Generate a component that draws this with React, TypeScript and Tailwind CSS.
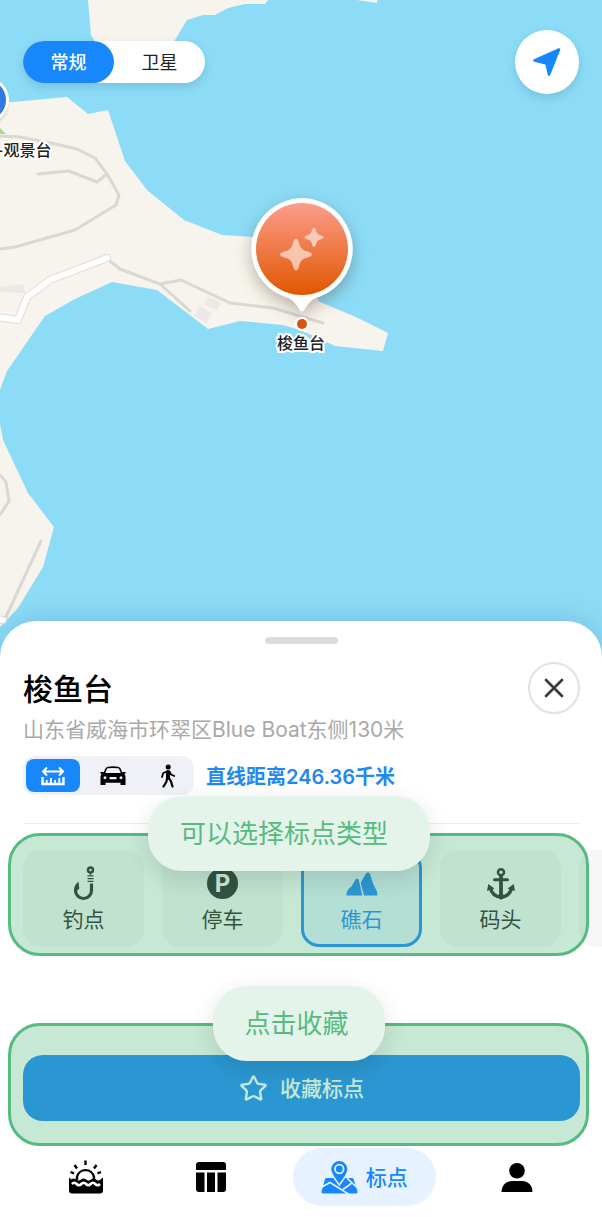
import { useState } from "react";
import type { ReactNode } from "react";
import { Star, X } from "lucide-react";

type Option = {
  id: string;
  label: string;
  icon: ReactNode;
};

const spotTypes: Option[] = [
  { id: "fishing", label: "钓点", icon: <HookIcon /> },
  { id: "parking", label: "停车", icon: <ParkingIcon /> },
  { id: "reef", label: "礁石", icon: <ReefIcon /> },
  { id: "dock", label: "码头", icon: <AnchorIcon /> },
];

export default function App() {
  const [layer, setLayer] = useState("normal");
  const [mode, setMode] = useState("line");
  const [spotType, setSpotType] = useState("reef");

  return (
    <main className="flex min-h-screen flex-col bg-[#8cdcf7] font-['Inter','Noto_Sans_CJK_SC',sans-serif] text-black">
      <section className="relative -mb-10 min-h-[480px] flex-1 overflow-hidden">
        <MapDrawing />

        <div className="absolute left-0 top-[140px] -ml-1">
          <p className={mapLabelClass}>-观景台</p>
        </div>

        <button
          type="button"
          className="absolute left-1/2 top-[196px] flex -translate-x-1/2 flex-col items-center"
        >
          <PinIcon />
          <span className={mapLabelClass}>梭鱼台</span>
        </button>

        <div className="relative flex items-start justify-between px-[23px] pt-[30px]">
          <div className="mt-[11px] flex rounded-full bg-white shadow-[0_4px_10px_rgba(0,60,90,0.16)]">
            <button
              type="button"
              onClick={() => setLayer("normal")}
              className={layer === "normal" ? layerActiveClass : layerClass}
            >
              常规
            </button>
            <button
              type="button"
              onClick={() => setLayer("satellite")}
              className={layer === "satellite" ? layerActiveClass : layerClass}
            >
              卫星
            </button>
          </div>

          <button
            type="button"
            aria-label="定位"
            className="flex size-16 items-center justify-center rounded-full bg-white shadow-[0_4px_10px_rgba(0,60,90,0.16)]"
          >
            <LocateIcon />
          </button>
        </div>
      </section>

      <section className="relative rounded-t-[36px] bg-white pl-[23px] pr-[22px] pt-4 shadow-[0_-4px_24px_rgba(0,60,90,0.14)]">
        <div className="mx-auto h-[7px] w-[73px] rounded-full bg-[#dcdcdc]" />

        <div className="mt-[18px] flex items-center justify-between">
          <h1 className="pt-0.5 text-[30px] font-medium leading-9">梭鱼台</h1>
          <button
            type="button"
            aria-label="关闭"
            className="flex size-[52px] items-center justify-center rounded-full border-2 border-[#e2e2e2] text-[#3a3a3a]"
          >
            <X size={32} strokeWidth={2} />
          </button>
        </div>

        <p className="pt-0.5 text-[21px] leading-7 text-[#a9a9a9]">
          山东省威海市环翠区Blue Boat东侧130米
        </p>

        <div className="mt-3 flex items-center gap-3">
          <div className="flex rounded-xl bg-[#eff1f7] p-[3px]">
            <button
              type="button"
              aria-label="直线"
              onClick={() => setMode("line")}
              className={`w-[54px] ${mode === "line" ? modeActiveClass : modeClass}`}
            >
              <RulerIcon />
            </button>
            <button
              type="button"
              aria-label="驾车"
              onClick={() => setMode("car")}
              className={`w-[65px] ${mode === "car" ? modeActiveClass : modeClass}`}
            >
              <CarIcon />
            </button>
            <button
              type="button"
              aria-label="步行"
              onClick={() => setMode("walk")}
              className={`w-[46px] ${mode === "walk" ? modeActiveClass : modeClass}`}
            >
              <WalkIcon />
            </button>
          </div>
          <p className="pt-0.5 text-[20px] font-semibold leading-7 text-[#2189f0]">
            直线距离246.36千米
          </p>
        </div>

        <hr className="mt-7 border-[#ededed]" />

        <div className="relative mt-[26px]">
          <div className="-mr-[22px] flex gap-[18px] overflow-hidden">
            {spotTypes.map((item) => (
              <button
                key={item.id}
                type="button"
                onClick={() => setSpotType(item.id)}
                className={spotType === item.id ? typeActiveClass : typeClass}
              >
                <span className="flex h-9 items-center">{item.icon}</span>
                <span className="text-[21px] leading-7">{item.label}</span>
              </button>
            ))}
            <div className="h-[97px] w-[121px] shrink-0 rounded-[18px] bg-[#f7f7f7]" />
          </div>
          <Highlight className="-bottom-[9px] -top-[17px]" labelClass="left-[137px] pr-[42px]">
            可以选择标点类型
          </Highlight>
        </div>

        <div className="relative mt-[108px]">
          <button
            type="button"
            className="flex h-[66px] w-full items-center justify-center gap-3 rounded-[20px] bg-[#1787fb] text-[21px] font-medium text-white"
          >
            <Star size={29} strokeWidth={2} />
            <span className="pt-0.5">收藏标点</span>
          </button>
          <Highlight
            className="-bottom-[25px] -top-8"
            labelClass="left-1/2 -translate-x-1/2 pr-9"
          >
            点击收藏
          </Highlight>
        </div>

        <nav className="mt-[27px] flex h-[58px] items-center">
          <a href="#tide" aria-label="潮汐" className={navClass}>
            <TideIcon />
          </a>
          <a href="#table" aria-label="数据" className={navClass}>
            <TableIcon />
          </a>
          <a
            href="#spots"
            aria-current="page"
            className="mx-[19px] flex h-full w-[143px] items-center justify-center gap-2 rounded-full bg-[#e6f2ff] text-[21px] font-medium text-[#1787fb]"
          >
            <MapPinIcon />
            <span className="pt-0.5">标点</span>
          </a>
          <a href="#me" aria-label="我的" className={navClass}>
            <PersonIcon />
          </a>
        </nav>
        <div className="h-[11px]" />
      </section>
    </main>
  );
}

function Highlight({
  className,
  labelClass,
  children,
}: {
  className: string;
  labelClass: string;
  children: ReactNode;
}) {
  return (
    <div
      className={`pointer-events-none absolute -left-[15px] -right-[9px] rounded-[32px] border-[3px] border-[#56bb80] bg-[#55b980]/33 ${className}`}
    >
      <p
        className={`absolute -top-10 flex h-[75px] items-center whitespace-nowrap rounded-[34px] bg-[#e5f4ea] pl-8 text-[26px] text-[#56bb80] shadow-[0_8px_24px_rgba(0,0,0,0.12)] ${labelClass}`}
      >
        {children}
      </p>
    </div>
  );
}

function MapDrawing() {
  return (
    <svg
      viewBox="0 0 602 661"
      preserveAspectRatio="xMidYMin slice"
      className="absolute inset-0 h-full w-full"
      aria-hidden="true"
    >
      <rect width="602" height="661" fill="#8cdcf7" />
      <g fill="#f6f4ec">
        <path d="M88 0 91 35 98 46H170L175 40 187 20 203 15H215L228 8 245 4H265L268 0Z" />
        <path d="M357 0 377 3V0Z" />
        <path d="M0 103 13 102 67 97 88 114 108 110 125 161 147 190 184 220 222 235 255 237 285 265 320 302 358 318 388 333 383 351 335 346 300 330 283 325 240 321 208 329 157 290 112 282 75 299 45 316 7 371 0 390Z" />
        <path d="M0 424 3 440 28 493 54 527 43 567 18 608 0 627Z" />
      </g>
      <path d="M0 128 6 134H0Z" fill="#a9dc86" />
      <g fill="#ece8e6">
        <path d="M0 287 23 284 25 293 0 292Z" />
        <path d="M200 306 212 313 206 323 194 316Z" />
        <path d="M208 297 221 303 217 310 204 305Z" />
      </g>
      <g fill="none" stroke="#dad8d2" strokeWidth="3" strokeLinecap="round" strokeLinejoin="round">
        <path d="M0 136 20 137 55 144 77 149 95 158 107 174 119 195 116 205 75 230 15 247 0 249" />
        <path d="M38 174 69 171 97 182 107 174" />
        <path d="M107 259 120 269 160 284 181 280 230 303 273 308 323 323" />
        <path d="M160 284 190 311" />
        <path d="M0 475 6 482 9 501 0 515" />
        <path d="M41 541 5 619" />
      </g>
      <g fill="none" strokeLinecap="round" strokeLinejoin="round">
        <path d="M-4 317 18 320 27 297 50 280 107 258" stroke="#dfdedd" strokeWidth="8" />
        <path d="M-4 317 18 320 27 297 50 280 107 258" stroke="#fff" strokeWidth="6" />
        <path d="M-4 619 3 620" stroke="#dfdedd" strokeWidth="8" />
        <path d="M-4 619 3 620" stroke="#fff" strokeWidth="6" />
      </g>
      <circle cx="-13" cy="104" r="22" fill="#000" opacity="0.08" />
      <circle cx="-14" cy="100" r="23" fill="#fff" />
      <circle cx="-14" cy="100" r="20" fill="#3478e2" />
    </svg>
  );
}

function PinIcon() {
  return (
    <svg
      width="104"
      height="137"
      viewBox="0 0 104 137"
      className="overflow-visible"
      aria-hidden="true"
    >
      <defs>
        <linearGradient id="pin" x1="0" y1="0" x2="0" y2="1">
          <stop offset="0" stopColor="#fc9d8b" />
          <stop offset="1" stopColor="#e15600" />
        </linearGradient>
      </defs>
      <g className="drop-shadow-[0_6px_8px_rgba(60,30,20,0.3)]">
        <path
          d="M53 2a51 51 0 0 1 17 99c-7 2-10 5-14 12q-3 5-6 0c-4-7-7-10-14-12A51 51 0 0 1 53 2Z"
          fill="#fff"
        />
      </g>
      <circle cx="53" cy="53" r="46" fill="url(#pin)" />
      <g fill="#fff" stroke="#fff" strokeWidth="1" strokeLinejoin="round" opacity="0.58">
        <path d="M47 43q1.300 0 1.800 1.700c2.300 8.500 3.500 9.500 12 12q1.700.5 1.700 1.800t-1.700 1.800c-8.500 2.500-9.700 3.500-12 12Q48.300 74 47 74t-1.800-1.700c-2.300-8.500-3.500-9.500-12-12Q31.500 59.800 31.500 58.500t1.700-1.800c8.500-2.500 9.700-3.500 12-12Q45.700 43 47 43Z" />
        <path d="M65 32q.8 0 1.100 1c1.500 5 2.200 5.700 7 7.200q1 .3 1 1.100t-1 1.100c-4.800 1.500-5.500 2.200-7 7.200q-.3 1-1.100 1t-1.100-1c-1.500-5-2.200-5.700-7-7.200q-1-.3-1-1.100t1-1.100c4.800-1.500 5.500-2.200 7-7.200q.3-1 1.100-1Z" />
      </g>
      <circle cx="53" cy="128" r="7" fill="#fff" />
      <circle cx="53" cy="128" r="5" fill="#d9540c" />
    </svg>
  );
}

function LocateIcon() {
  return (
    <svg width="30" height="30" viewBox="0 0 30 30" aria-hidden="true">
      <path
        d="M2.500 13.500 27 2.500 17 27.500 14.500 16.500Z"
        fill="#1787fb"
        stroke="#1787fb"
        strokeWidth="2.600"
        strokeLinejoin="round"
      />
    </svg>
  );
}

function RulerIcon() {
  return (
    <svg width="24" height="20" viewBox="0 0 24 20" fill="none" stroke="currentColor" aria-hidden="true">
      <path d="M2 5.500H22M6 1.500 2 5.500 6 9.500M18 1.500 22 5.500 18 9.500" strokeWidth="2" />
      <path d="M1.500 11V18H22.500V11" strokeWidth="2.400" />
      <path d="M5.700 14V18M9.900 12V18M14.100 14V18M18.300 12V18" strokeWidth="1.800" />
    </svg>
  );
}

function CarIcon() {
  return (
    <svg width="26" height="20" viewBox="0 0 26 20" aria-hidden="true">
      <path
        d="M4 8 6 3Q6.500 1.700 8 1.500 13 .8 18 1.500 19.500 1.700 20 3L22 8"
        fill="none"
        stroke="currentColor"
        strokeWidth="1.600"
      />
      <path
        fill="currentColor"
        fillRule="evenodd"
        d="M.5 6H3.500L4.500 7H21.500L22.500 6H25.500V7.800H24.300Q25.500 9.500 25.500 11V19H20.500V16.800H5.500V19H.5V11Q.5 9.500 1.700 7.800H.5ZM5 10.300a1.500 1.500 0 1 0 .01 0ZM21 10.300a1.500 1.500 0 1 0 .01 0ZM9.500 11V13.200H16.500V11Z"
      />
    </svg>
  );
}

function WalkIcon() {
  return (
    <svg
      width="16"
      height="24"
      viewBox="0 0 16 24"
      fill="none"
      stroke="currentColor"
      strokeLinecap="round"
      strokeLinejoin="round"
      aria-hidden="true"
    >
      <circle cx="8.200" cy="3" r="2.500" fill="currentColor" stroke="none" />
      <path d="M8 8V14" strokeWidth="4" />
      <path d="M7 7.500 3.300 9 2 13M9.500 7.500 11 10.500 14.300 12" strokeWidth="1.800" />
      <path d="M7.200 14 6.300 18 3.500 22.500M9 14 11 17.500 12.500 22.500" strokeWidth="2.200" />
    </svg>
  );
}

function HookIcon() {
  return (
    <svg width="22" height="35" viewBox="0 0 22 35" fill="none" stroke="currentColor" aria-hidden="true">
      <circle cx="17.500" cy="4" r="2.500" strokeWidth="2.500" />
      <path d="M14.500 9.800H20.500M14.500 12.600H20.500M14.500 15.400H20.500" strokeWidth="1.300" />
      <path d="M17.500 7V9" strokeWidth="1.300" />
      <path d="M18.500 17.500V24.500A8 8 0 0 1 2.500 24.500" strokeWidth="3.200" />
      <path d="M.9 25 Q1 19 5.500 15.500L6.300 22.500 4 25Z" fill="currentColor" stroke="none" />
    </svg>
  );
}

function ParkingIcon() {
  return (
    <span className="flex size-[31px] items-center justify-center rounded-full bg-current">
      <span className="text-2xl font-bold text-white">P</span>
    </span>
  );
}

function ReefIcon() {
  return (
    <svg width="32" height="24" viewBox="0 0 32 24" fill="currentColor" aria-hidden="true">
      <path d="M.5 23.500V20.500L3 16.500 5.500 14.500 9.500 7.500Q10 6.500 11 6.500 12.500 6.500 12.800 8L16.300 23.500Z" />
      <path d="M18 23.500 15 12.500Q14.500 10.500 15.500 9L20 1.500Q20.800.5 22 .5 23.500.5 24 2L27 11.500 31 19.500 31.500 23.500Z" />
    </svg>
  );
}

function AnchorIcon() {
  return (
    <svg width="28" height="32" viewBox="0 0 28 32" fill="none" stroke="currentColor" aria-hidden="true">
      <circle cx="14" cy="4.300" r="3" strokeWidth="2.500" />
      <path d="M7.500 11.800H20.500" strokeWidth="3" strokeLinecap="round" />
      <path d="M14 7V29" strokeWidth="3.800" />
      <path d="M3.500 20C4.500 25.500 8.500 28.500 14 29.200 19.500 28.500 23.500 25.500 24.500 20" strokeWidth="3.500" />
      <path
        d="M0 23 1.300 16 7.500 20.500ZM28 23 26.700 16 20.500 20.500ZM9.500 28 14 32 18.500 28 14 25Z"
        fill="currentColor"
        stroke="none"
      />
    </svg>
  );
}

function TideIcon() {
  return (
    <svg width="34" height="34" viewBox="0 0 34 34" aria-hidden="true">
      <g fill="none" stroke="currentColor" strokeWidth="2.400">
        <path d="M16.500.5V5M5.500 5 8 8.500M27.500 5 25 8.500M1.500 12 5 13.300M32 12 28.500 13.300" />
        <path d="M8 20V17a8.700 8.700 0 0 1 17 0V20" />
      </g>
      <path
        fill="currentColor"
        d="M0 17.500 2.500 19.500Q4.500 17.500 7 19.500T12 19.500 17 19.500 22 19.500 27 19.500 31.500 19.500L34 17.500V30.500Q34 33.500 31 33.500H3Q0 33.500 0 30.500Z"
      />
      <path
        fill="none"
        stroke="#fff"
        strokeWidth="2.600"
        d="M3 24Q5.300 21.500 7.600 24T12.300 24 17 24 21.600 24 26.300 24 31 24"
      />
    </svg>
  );
}

function TableIcon() {
  return (
    <svg width="30" height="30" viewBox="0 0 30 30" fill="currentColor" aria-hidden="true">
      <path d="M3 0H27Q30 0 30 3V8H0V3Q0 0 3 0Z" />
      <path d="M0 10.500H8.500V30H3Q0 30 0 27Z" />
      <path d="M11 10.500H19V30H11Z" />
      <path d="M21.500 10.500H30V27Q30 30 27 30H21.500Z" />
    </svg>
  );
}

function MapPinIcon() {
  return (
    <svg width="37" height="34" viewBox="0 0 37 34" aria-hidden="true">
      <path
        d="M5.500 18H31Q32 18 32.500 19L36.500 31.500Q37 33.500 35 33.500H2Q0 33.500 .5 31.500L4 19Q4.500 18 5.500 18Z"
        fill="#1787fb"
      />
      <path
        d="M0 27.500 9 22.500 29 35M22 29.500 31 23 26 18M31 23 38 29"
        fill="none"
        stroke="#e6f2ff"
        strokeWidth="1.600"
      />
      <path
        d="M18.300.3a8.800 8.800 0 0 1 8.800 8.800c0 5.500-5.500 11-8.800 16-3.300-5-8.800-10.500-8.800-16A8.800 8.800 0 0 1 18.300.3Z"
        fill="#1787fb"
        stroke="#e6f2ff"
        strokeWidth="1.500"
      />
      <circle cx="18.300" cy="9" r="4.300" fill="none" stroke="#e6f2ff" strokeWidth="1.700" />
    </svg>
  );
}

function PersonIcon() {
  return (
    <svg width="32" height="29" viewBox="0 0 32 29" fill="currentColor" aria-hidden="true">
      <circle cx="16" cy="7.800" r="7.800" />
      <path d="M.5 29C.5 22 5 18 11 18H21C27 18 31.500 22 31.500 29Z" />
    </svg>
  );
}

const mapLabelClass =
  "whitespace-nowrap text-base font-medium leading-5 text-[#222] [-webkit-text-stroke:4px_white] [paint-order:stroke_fill]";

const layerClass = "h-[42px] w-[91px] rounded-full pt-0.5 text-lg text-[#222]";

const layerActiveClass =
  "h-[42px] w-[91px] rounded-full bg-[#1787fb] pt-0.5 text-lg font-medium text-white";

const modeClass = "flex h-[33px] items-center justify-center rounded-lg text-black";

const modeActiveClass =
  "flex h-[33px] items-center justify-center rounded-lg bg-[#1787fb] text-white";

const typeClass =
  "flex h-[97px] w-[121px] shrink-0 flex-col items-center justify-center gap-1 rounded-[18px] border-[3px] border-transparent bg-[#f7f7f7] pt-0.5 text-[#222]";

const typeActiveClass =
  "flex h-[97px] w-[121px] shrink-0 flex-col items-center justify-center gap-1 rounded-[18px] border-[3px] border-[#1787fb] bg-[#e3f2ff] pt-0.5 text-[#1787fb]";

const navClass = "flex flex-1 items-center justify-center";
